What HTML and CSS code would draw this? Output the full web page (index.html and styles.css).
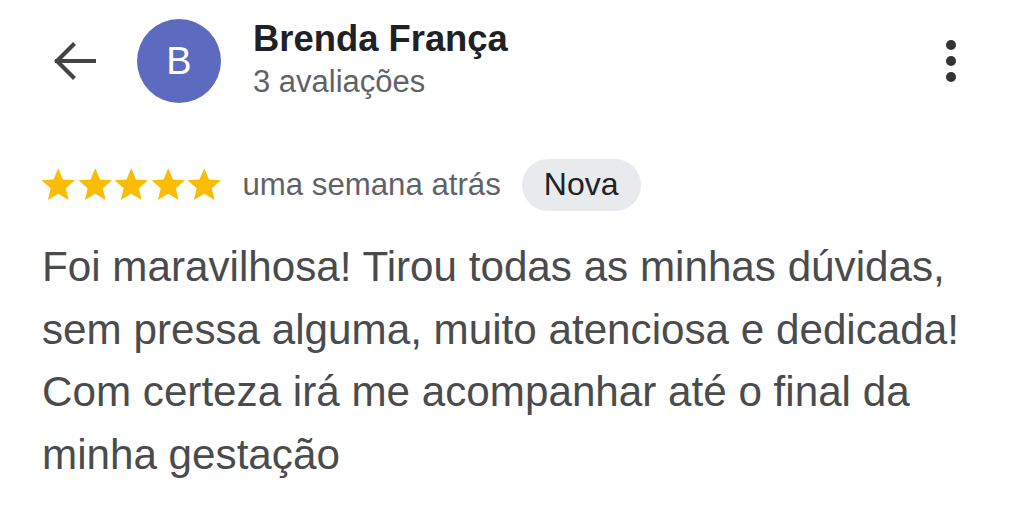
FILE: index.html
```html
<!DOCTYPE html>
<html lang="pt-BR">
<head>
  <meta charset="UTF-8" />
  <title>Avaliação - Brenda França</title>
  <meta name="viewport" content="width=device-width, initial-scale=1.0"/>
  <link rel="stylesheet" href="styles.css">
</head>
<body>

  <header class="top-bar">
    <button class="back-btn" aria-label="Voltar">
      <svg width="44" height="38" viewBox="0 0 44 38">
        <path d="M42 19H5M21 3L5 19l16 16" fill="none" stroke="#444" stroke-width="4.2" stroke-linecap="square" stroke-linejoin="miter"/>
      </svg>
    </button>
    <div class="avatar">B</div>
    <div class="reviewer">
      <div class="name">Brenda França</div>
      <div class="count">3 avaliações</div>
    </div>
    <button class="menu-btn" aria-label="Mais opções">
      <span></span><span></span><span></span>
    </button>
  </header>

  <main class="review">
    <div class="meta">
      <div class="stars">
        <svg viewBox="0 0 24 24"><path d="M12 1.5l3.1 7.3 7.9.6-6 5.2 1.8 7.7L12 18.2l-6.8 4.1 1.8-7.7-6-5.2 7.9-.6z"/></svg>
        <svg viewBox="0 0 24 24"><path d="M12 1.5l3.1 7.3 7.9.6-6 5.2 1.8 7.7L12 18.2l-6.8 4.1 1.8-7.7-6-5.2 7.9-.6z"/></svg>
        <svg viewBox="0 0 24 24"><path d="M12 1.5l3.1 7.3 7.9.6-6 5.2 1.8 7.7L12 18.2l-6.8 4.1 1.8-7.7-6-5.2 7.9-.6z"/></svg>
        <svg viewBox="0 0 24 24"><path d="M12 1.5l3.1 7.3 7.9.6-6 5.2 1.8 7.7L12 18.2l-6.8 4.1 1.8-7.7-6-5.2 7.9-.6z"/></svg>
        <svg viewBox="0 0 24 24"><path d="M12 1.5l3.1 7.3 7.9.6-6 5.2 1.8 7.7L12 18.2l-6.8 4.1 1.8-7.7-6-5.2 7.9-.6z"/></svg>
      </div>
      <span class="when">uma semana atrás</span>
      <span class="chip">Nova</span>
    </div>
    <p class="text">Foi maravilhosa! Tirou todas as minhas dúvidas, sem pressa alguma, muito atenciosa e dedicada! Com certeza irá me acompanhar até o final da minha gestação</p>
  </main>

</body>
</html>
```

FILE: styles.css
```css
:root {
  --dark: #202124;
  --grey: #5f6368;
  --body-text: #4a4b4d;
  --avatar: #5c6bc0;
  --star: #fbbc04;
  --chip: #e8eaed;
}

body {
  margin: 0;
  font-family: 'Liberation Sans', Arial, sans-serif;
  background: #ffffff;
  color: var(--dark);
}

button {
  background: none;
  border: none;
  padding: 0;
  cursor: pointer;
}

.top-bar {
  display: flex;
  align-items: center;
  height: 84px;
  padding: 19px 52px 0 52px;
}

.back-btn {
  display: flex;
  width: 44px;
  height: 38px;
}

.avatar {
  width: 84px;
  height: 84px;
  margin-left: 41px;
  border-radius: 50%;
  background: var(--avatar);
  color: #fff;
  font-size: 38px;
  display: flex;
  align-items: center;
  justify-content: center;
}

.reviewer {
  margin-left: 32px;
  flex: 1;
  margin-top: -1px;
}

.name {
  font-size: 36.4px;
  font-weight: bold;
  line-height: 42px;
  color: var(--dark);
}

.count {
  font-size: 31px;
  line-height: 44px;
  color: var(--grey);
}

.menu-btn {
  display: flex;
  flex-direction: column;
  gap: 6px;
  margin-right: 16px;
}

.menu-btn span {
  width: 10px;
  height: 10px;
  border-radius: 50%;
  background: #333;
}

.review {
  padding: 0 42px;
}

.meta {
  display: flex;
  align-items: center;
  margin-top: 55px;
  height: 53px;
}

.stars {
  display: flex;
  gap: 0;
  margin-left: -2px;
}

.stars svg {
  width: 36.5px;
  height: 36.5px;
  fill: var(--star);
}

.when {
  margin-left: 20px;
  font-size: 31.2px;
  color: var(--grey);
}

.chip {
  margin-left: 21px;
  height: 52px;
  padding: 0 22px;
  border-radius: 26px;
  background: var(--chip);
  font-size: 32px;
  color: var(--dark);
  display: flex;
  align-items: center;
}

.text {
  margin: 25px 0 0 0;
  font-size: 42.2px;
  line-height: 62.5px;
  color: var(--body-text);
}
```
